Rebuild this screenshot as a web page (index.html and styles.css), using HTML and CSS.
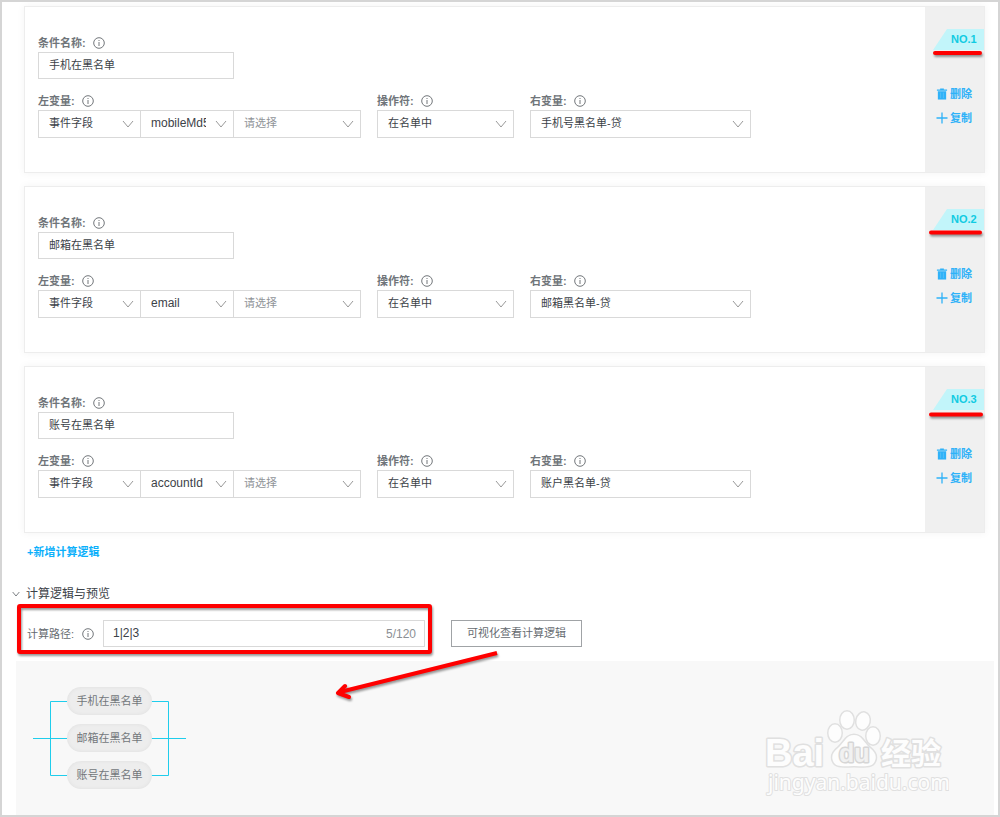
FILE: index.html
```html
<!DOCTYPE html>
<html lang="zh-CN">
<head>
    <meta charset="UTF-8">
    <meta name="viewport" content="width=device-width, initial-scale=1.0">
    <title>计算逻辑</title>
    <link rel="stylesheet" href="styles.css">
</head>
<body>

    <!-- shared icons -->
    <svg class="icon-defs" width="0" height="0">
        <symbol id="icon-info" viewBox="0 0 12 12">
            <circle cx="6" cy="6" r="5.300" fill="none" stroke="currentColor"/>
            <path d="M6 5v4M6 3v1" fill="none" stroke="currentColor"/>
        </symbol>
        <symbol id="icon-down" viewBox="0 0 12 8">
            <path d="M1 1l5 6 5-6" fill="none" stroke="currentColor"/>
        </symbol>
        <symbol id="icon-trash" viewBox="0 0 12 13">
            <path d="M4 1.500V.5h4v1h3.500v1.500H.500V1.500z" fill="currentColor"/>
            <path d="M1.500 3.500h9V12.500h-9z" fill="currentColor"/>
            <path d="M4.500 5v6M7.500 5v6" stroke="#55c0f9" fill="none"/>
        </symbol>
        <symbol id="icon-plus" viewBox="0 0 12 12">
            <path d="M6 .5v11M.5 6h11" fill="none" stroke="currentColor" stroke-width="1.300"/>
        </symbol>
    </svg>

    <main class="page">
        <section class="card">
            <div class="card-body">
                <div class="field name-field">
                    <label for="name1">条件名称: <svg class="info"><use href="#icon-info"/></svg></label>
                    <input type="text" id="name1" value="手机在黑名单">
                </div>
                <div class="row">
                    <div class="field">
                        <label for="left1">左变量: <svg class="info"><use href="#icon-info"/></svg></label>
                        <div class="group">
                            <div class="select type"><select id="left1"><option>事件字段</option></select><svg class="arrow"><use href="#icon-down"/></svg></div>
                            <div class="select key"><select aria-label="字段"><option>mobileMd5</option></select><svg class="arrow"><use href="#icon-down"/></svg></div>
                            <div class="select extra"><select aria-label="请选择"><option>请选择</option></select><svg class="arrow"><use href="#icon-down"/></svg></div>
                        </div>
                    </div>
                    <div class="field">
                        <label for="op1">操作符: <svg class="info"><use href="#icon-info"/></svg></label>
                        <div class="select operator"><select id="op1"><option>在名单中</option></select><svg class="arrow"><use href="#icon-down"/></svg></div>
                    </div>
                    <div class="field">
                        <label for="right1">右变量: <svg class="info"><use href="#icon-info"/></svg></label>
                        <div class="select list"><select id="right1"><option>手机号黑名单-贷</option></select><svg class="arrow"><use href="#icon-down"/></svg></div>
                    </div>
                </div>
            </div>
            <div class="card-side">
                <span class="tag">NO.1</span>
                <button type="button"><svg class="trash"><use href="#icon-trash"/></svg>删除</button>
                <button type="button"><svg class="plus"><use href="#icon-plus"/></svg>复制</button>
            </div>
        </section>

        <section class="card">
            <div class="card-body">
                <div class="field name-field">
                    <label for="name2">条件名称: <svg class="info"><use href="#icon-info"/></svg></label>
                    <input type="text" id="name2" value="邮箱在黑名单">
                </div>
                <div class="row">
                    <div class="field">
                        <label for="left2">左变量: <svg class="info"><use href="#icon-info"/></svg></label>
                        <div class="group">
                            <div class="select type"><select id="left2"><option>事件字段</option></select><svg class="arrow"><use href="#icon-down"/></svg></div>
                            <div class="select key"><select aria-label="字段"><option>email</option></select><svg class="arrow"><use href="#icon-down"/></svg></div>
                            <div class="select extra"><select aria-label="请选择"><option>请选择</option></select><svg class="arrow"><use href="#icon-down"/></svg></div>
                        </div>
                    </div>
                    <div class="field">
                        <label for="op2">操作符: <svg class="info"><use href="#icon-info"/></svg></label>
                        <div class="select operator"><select id="op2"><option>在名单中</option></select><svg class="arrow"><use href="#icon-down"/></svg></div>
                    </div>
                    <div class="field">
                        <label for="right2">右变量: <svg class="info"><use href="#icon-info"/></svg></label>
                        <div class="select list"><select id="right2"><option>邮箱黑名单-贷</option></select><svg class="arrow"><use href="#icon-down"/></svg></div>
                    </div>
                </div>
            </div>
            <div class="card-side">
                <span class="tag">NO.2</span>
                <button type="button"><svg class="trash"><use href="#icon-trash"/></svg>删除</button>
                <button type="button"><svg class="plus"><use href="#icon-plus"/></svg>复制</button>
            </div>
        </section>

        <section class="card">
            <div class="card-body">
                <div class="field name-field">
                    <label for="name3">条件名称: <svg class="info"><use href="#icon-info"/></svg></label>
                    <input type="text" id="name3" value="账号在黑名单">
                </div>
                <div class="row">
                    <div class="field">
                        <label for="left3">左变量: <svg class="info"><use href="#icon-info"/></svg></label>
                        <div class="group">
                            <div class="select type"><select id="left3"><option>事件字段</option></select><svg class="arrow"><use href="#icon-down"/></svg></div>
                            <div class="select key"><select aria-label="字段"><option>accountId</option></select><svg class="arrow"><use href="#icon-down"/></svg></div>
                            <div class="select extra"><select aria-label="请选择"><option>请选择</option></select><svg class="arrow"><use href="#icon-down"/></svg></div>
                        </div>
                    </div>
                    <div class="field">
                        <label for="op3">操作符: <svg class="info"><use href="#icon-info"/></svg></label>
                        <div class="select operator"><select id="op3"><option>在名单中</option></select><svg class="arrow"><use href="#icon-down"/></svg></div>
                    </div>
                    <div class="field">
                        <label for="right3">右变量: <svg class="info"><use href="#icon-info"/></svg></label>
                        <div class="select list"><select id="right3"><option>账户黑名单-贷</option></select><svg class="arrow"><use href="#icon-down"/></svg></div>
                    </div>
                </div>
            </div>
            <div class="card-side">
                <span class="tag">NO.3</span>
                <button type="button"><svg class="trash"><use href="#icon-trash"/></svg>删除</button>
                <button type="button"><svg class="plus"><use href="#icon-plus"/></svg>复制</button>
            </div>
        </section>

        <a class="add-link" href="#">+新增计算逻辑</a>

        <h2><svg class="toggle"><use href="#icon-down"/></svg>计算逻辑与预览</h2>

        <div class="path-row">
            <label for="path">计算路径: <svg class="info"><use href="#icon-info"/></svg></label>
            <div class="path-box">
                <input type="text" id="path" value="1|2|3" maxlength="120">
                <span>5/120</span>
            </div>
            <button type="button" class="view-btn">可视化查看计算逻辑</button>
        </div>

        <div class="preview">
            <div class="flow">
                <svg class="wires" width="153" height="102" viewBox="0 0 153 102">
                    <path d="M0 51.500h34M118 51.500h35M34 14.500H17.500v74H34M118 14.500h17.500v74H118" fill="none" stroke="#1fcdec"/>
                </svg>
                <span class="node">手机在黑名单</span>
                <span class="node">邮箱在黑名单</span>
                <span class="node">账号在黑名单</span>
            </div>
            <svg class="watermark" width="190" height="100" viewBox="0 0 190 100">
                <g fill="#fdfdfd" stroke="#e0e0e0" stroke-width="3" paint-order="stroke" stroke-linejoin="round">
                    <text class="wm-logo" x="6" y="65">Bai</text>
                    <ellipse cx="76" cy="32" rx="6.500" ry="8.500"/>
                    <ellipse cx="88" cy="19" rx="6.500" ry="8.500"/>
                    <ellipse cx="104" cy="20" rx="6.500" ry="8.500" transform="rotate(12 104 20)"/>
                    <ellipse cx="114" cy="35" rx="6.500" ry="8.500"/>
                    <path d="M95 34c-8 0-10 8-16 13-5 4-7 8-5 13 3 7 11 5 21 5s18 2 21-5c2-5 0-9-5-13-6-5-8-13-16-13z"/>
                    <text class="wm-du" x="80" y="61" stroke="#d6d6d6" fill="#f1f1f1">du</text>
                    <text class="wm-cn" x="122" y="63">经验</text>
                    <text class="wm-url" x="9" y="89" stroke-width="2">jingyan.baidu.com</text>
                </g>
            </svg>
        </div>

        <!-- red marks over the form -->
        <svg class="marks" width="996" height="813" viewBox="2 2 996 813">
            <g fill="none" stroke="#fe0000" stroke-width="4" stroke-linecap="round" stroke-linejoin="round">
                <path d="M935 53h45M931 232.500h49M931 414.500h50"/>
                <rect x="19" y="606" width="411" height="46" rx="1"/>
                <path d="M497 653L340 692" stroke-linecap="butt"/>
                <path d="M345 686l-7 7 11 4"/>
            </g>
        </svg>
    </main>

</body>
</html>
```
FILE: styles.css
```css
* {
    box-sizing: border-box;
}
body {
    margin: 0;
    font-family: "Liberation Sans", "Noto Sans CJK SC", sans-serif;
    font-size: 11px;
    line-height: 16px;
    color: #3c4248;
    background-color: #fff;
}
input, select, button {
    font: inherit;
    color: inherit;
}
.icon-defs {
    position: absolute;
}
.page {
    position: relative;
    min-height: 100vh;
    padding: 4px 4px 0 14px;
    border: 2px solid #d5d5d5;
    overflow: hidden;
}

/* condition cards */
.card {
    display: flex;
    height: 167px;
    margin: 0 9px 13px 8px;
    border: 1px solid #ededed;
    box-shadow: 0 0 8px rgba(0,0,0,0.05);
}
.card-body {
    flex: 1;
    padding: 28px 13px 0;
}
.field label {
    display: flex;
    align-items: center;
    gap: 7px;
    height: 17px;
    padding-bottom: 1px;
    font-weight: bold;
    color: #70757a;
}
.info {
    width: 12px;
    height: 12px;
    color: #73777b;
}
.name-field {
    margin-bottom: 14px;
}
.name-field input {
    display: block;
    width: 196px;
    height: 27px;
    padding: 0 10px 4px;
    border: 1px solid #d9d9d9;
}
.row {
    display: flex;
    gap: 16px;
}
.group {
    display: flex;
}
.select {
    position: relative;
}
.select + .select {
    margin-left: -1px;
}
.select select {
    display: block;
    width: 100%;
    height: 28px;
    padding: 0 27px 2px 10px;
    border: 1px solid #d9d9d9;
    border-radius: 0;
    background-color: transparent;
    appearance: none;
}
.arrow {
    position: absolute;
    right: 7px;
    top: 10px;
    width: 12px;
    height: 8px;
    color: #999;
    pointer-events: none;
}
.type {
    width: 103px;
}
.key {
    width: 94px;
}
.key select {
    font-size: 12px;
}
.extra {
    width: 128px;
}
.extra select {
    color: #909498;
}
.operator {
    width: 137px;
}
.list {
    width: 221px;
}

/* right column of a card */
.card-side {
    display: flex;
    flex-direction: column;
    align-items: flex-end;
    width: 59px;
    padding-top: 22px;
    background-color: #f0f0f0;
}
.tag {
    width: 51px;
    height: 21px;
    margin-bottom: 32px;
    padding-left: 18px;
    line-height: 21px;
    font-weight: bold;
    color: #10cbe2;
    background-color: #c2f5fa;
    clip-path: polygon(14px 0, 100% 0, 100% 100%, 0 100%);
}
.card-side button {
    display: flex;
    align-items: center;
    gap: 2px;
    height: 24px;
    padding: 0 12px 0 0;
    border: 0;
    background: none;
    font-weight: bold;
    color: #2fb2f8;
}
.trash, .plus {
    width: 12px;
    height: 12px;
}

.add-link {
    display: block;
    margin: -2px 0 26px 11px;
    font-weight: bold;
    color: #0bb0fb;
    text-decoration: none;
}
h2 {
    display: flex;
    align-items: center;
    gap: 6px;
    margin: 0 0 18px -4px;
    font-size: 12px;
    font-weight: normal;
}
.toggle {
    width: 8px;
    height: 6px;
}

/* path input */
.path-row {
    display: flex;
    align-items: center;
    margin-left: 11px;
}
.path-row label {
    display: flex;
    align-items: center;
    gap: 8px;
    width: 76px;
    color: #666b70;
}
.path-box {
    display: flex;
    align-items: center;
    width: 322px;
    height: 27px;
    padding: 0 8px;
    border: 1px solid #d9d9d9;
}
.path-box input {
    flex: 1;
    min-width: 0;
    padding: 0 1px 2px;
    border: 0;
    font-size: 12px;
    outline: none;
}
.path-box span {
    color: #8c9094;
    font-size: 12px;
}
.view-btn {
    width: 131px;
    height: 27px;
    margin-left: 26px;
    padding: 0 0 2px;
    border: 1px solid #a0a3a6;
    background-color: #fff;
    color: #666b70;
}

/* flow preview */
.preview {
    display: flex;
    justify-content: space-between;
    margin-top: 14px;
    height: 154px;
    padding: 26px 45px 0 17px;
    background-color: #f8f8f8;
}
.flow {
    position: relative;
    display: flex;
    flex-direction: column;
    align-items: center;
    gap: 9px;
    width: 153px;
}
.wires {
    position: absolute;
    left: 0;
    top: 0;
}
.node {
    position: relative;
    width: 85px;
    height: 28px;
    border-radius: 14px;
    background-color: #ededed;
    box-shadow: inset 0 0 4px rgba(0,0,0,0.06);
    line-height: 28px;
    text-align: center;
    color: #73777b;
}
.watermark {
    margin-top: 14px;
}
.wm-logo {
    font: bold 38px "Liberation Sans", sans-serif;
}
.wm-du {
    font: bold 25px "Liberation Sans", sans-serif;
}
.wm-cn {
    font: bold 30px "Noto Sans CJK SC", sans-serif;
}
.wm-url {
    font: 21px "Noto Sans", sans-serif;
}
.marks {
    position: absolute;
    left: 0;
    top: 0;
    pointer-events: none;
    filter: drop-shadow(1px 2px 1px rgba(0,0,0,0.4));
}
```
